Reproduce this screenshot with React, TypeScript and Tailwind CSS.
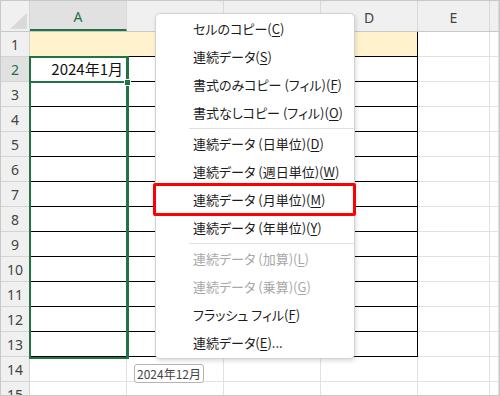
import type { ReactNode } from "react";

type MenuItem = { label: string; key: string; tail?: string; disabled?: boolean } | "sep";

const menuItems: MenuItem[] = [
  { label: "セルのコピー", key: "C" },
  { label: "連続データ", key: "S" },
  { label: "書式のみコピー (フィル)", key: "F" },
  { label: "書式なしコピー (フィル)", key: "O" },
  "sep",
  { label: "連続データ (日単位)", key: "D" },
  { label: "連続データ (週日単位)", key: "W" },
  { label: "連続データ (月単位)", key: "M" },
  { label: "連続データ (年単位)", key: "Y" },
  "sep",
  { label: "連続データ (加算)", key: "L", disabled: true },
  { label: "連続データ (乗算)", key: "G", disabled: true },
  { label: "フラッシュ フィル", key: "F" },
  { label: "連続データ", key: "E", tail: "..." },
];

const colWidths = ["w-[97px]", "w-[97px]", "w-[97px]", "w-[97px]", "w-[72px]", "flex-1"];
// B and C labels sit under the context menu
const colNames = ["A", "", "", "D", "E", ""];

function Cell({ row, col, children }: { row: number; col: number; children?: ReactNode }) {
  const inTable = col <= 3 && row <= 13;
  const bg = row === 1 && inTable ? "bg-[#fff2cc]" : "bg-white";
  const bottom = inTable ? "border-b-black" : "border-b-[#e1e1e1]";
  let right = "border-r-[#e1e1e1]";
  if (inTable && col === 3) right = "border-r-black";
  else if (row === 1 && inTable) right = "border-r-[#fff2cc]";
  return (
    <div className={`${colWidths[col]} h-full border-r border-b ${bg} ${bottom} ${right} flex items-center justify-end pr-[3px]`}>
      {children}
    </div>
  );
}

export default function App() {
  const rows = Array.from({ length: 15 }, (_, i) => i + 1);
  return (
    <div className="relative w-[500px] h-[396px] overflow-hidden border border-[#c8c8c8] bg-white" style={{ fontFamily: '"Noto Sans", "Noto Sans CJK JP", sans-serif' }}>
      {/* column headers */}
      <div className="flex h-[31px] bg-[#f0f0f0] border-b border-[#c8c8c8]">
        <div className="w-[29px] border-r border-[#d4d4d4] relative">
          <svg width="28" height="30" className="absolute left-0 top-0">
            <polygon points="9,28 26,12 26,28" fill="#d9d9d9" />
          </svg>
        </div>
        {colNames.map((name, i) => (
          <div
            key={i}
            className={`${colWidths[i]} border-r border-[#d9d9d9] flex items-center justify-center text-[14px] pt-[3px] ${
              i === 0 ? "bg-[#e1e1e1] text-[#217346] border-b-2 border-b-[#217346]" : "text-[#444]"
            }`}
          >
            {name}
          </div>
        ))}
      </div>

      {/* rows */}
      {rows.map((r) => (
        <div key={r} className="flex h-[25px] shrink-0">
          <div
            className={`w-[29px] h-full border-r border-b border-[#d4d4d4] flex items-center justify-center text-[14px] ${
              r === 2 ? "bg-[#e1e1e1] text-[#217346]" : "bg-[#f0f0f0] text-[#444]"
            }`}
          >
            {r}
          </div>
          {colNames.map((_, c) => (
            <Cell key={c} row={r} col={c}>
              {r === 2 && c === 0 ? (
                <span className="text-[15px] text-[#111]" style={{ fontFamily: '"Noto Sans CJK JP", sans-serif' }}>2024年1月</span>
              ) : null}
            </Cell>
          ))}
        </div>
      ))}

      {/* selection range A2:A13 */}
      <div className="absolute left-[28px] top-[55px] w-[100px] h-[303px] border-2 border-r-[3px] border-[#217346] pointer-events-none" />
      {/* active cell A2 */}
      <div className="absolute left-[28px] top-[55px] w-[100px] h-[27px] border-b-2 border-[#217346]" />
      {/* fill handle */}
      <div className="absolute left-[123px] top-[78px] w-[7px] h-[7px] bg-[#217346] border border-white" />

      {/* auto fill tooltip */}
      <div
        className="absolute left-[133px] top-[363px] h-[19px] px-[2px] flex items-center border border-[#b4b4b4] rounded-[3px] bg-white text-[12px] text-[#444]"
        style={{ fontFamily: '"Noto Sans CJK JP", sans-serif' }}
      >
        2024年12月
      </div>

      {/* context menu */}
      <div
        className="absolute left-[154px] top-[12px] w-[200px] bg-white border border-[#d2d2d2] rounded-[5px] py-[1px] shadow-[1px_2px_4px_rgba(0,0,0,0.14)] text-[13px] [font-feature-settings:'palt']"
        style={{ fontFamily: '"Noto Sans CJK JP", sans-serif' }}
      >
        {menuItems.map((item, i) =>
          item === "sep" ? (
            <div key={i} className="h-[3px] flex items-center pl-[33px]">
              <div className="h-px w-full bg-[#e0e0e0]" />
            </div>
          ) : (
            <div
              key={i}
              className={`h-[28px] flex items-center pl-[37px] whitespace-pre ${item.disabled ? "text-[#a8a8a8]" : "text-[#1b1b1b]"}`}
            >
              {item.label}(<span className="underline underline-offset-2">{item.key}</span>){item.tail}
            </div>
          )
        )}
      </div>

      {/* red highlight */}
      <div className="absolute left-[152px] top-[182px] w-[203px] h-[33px] border-[3px] border-[#ff0000] rounded-[2px]" />
    </div>
  );
}
